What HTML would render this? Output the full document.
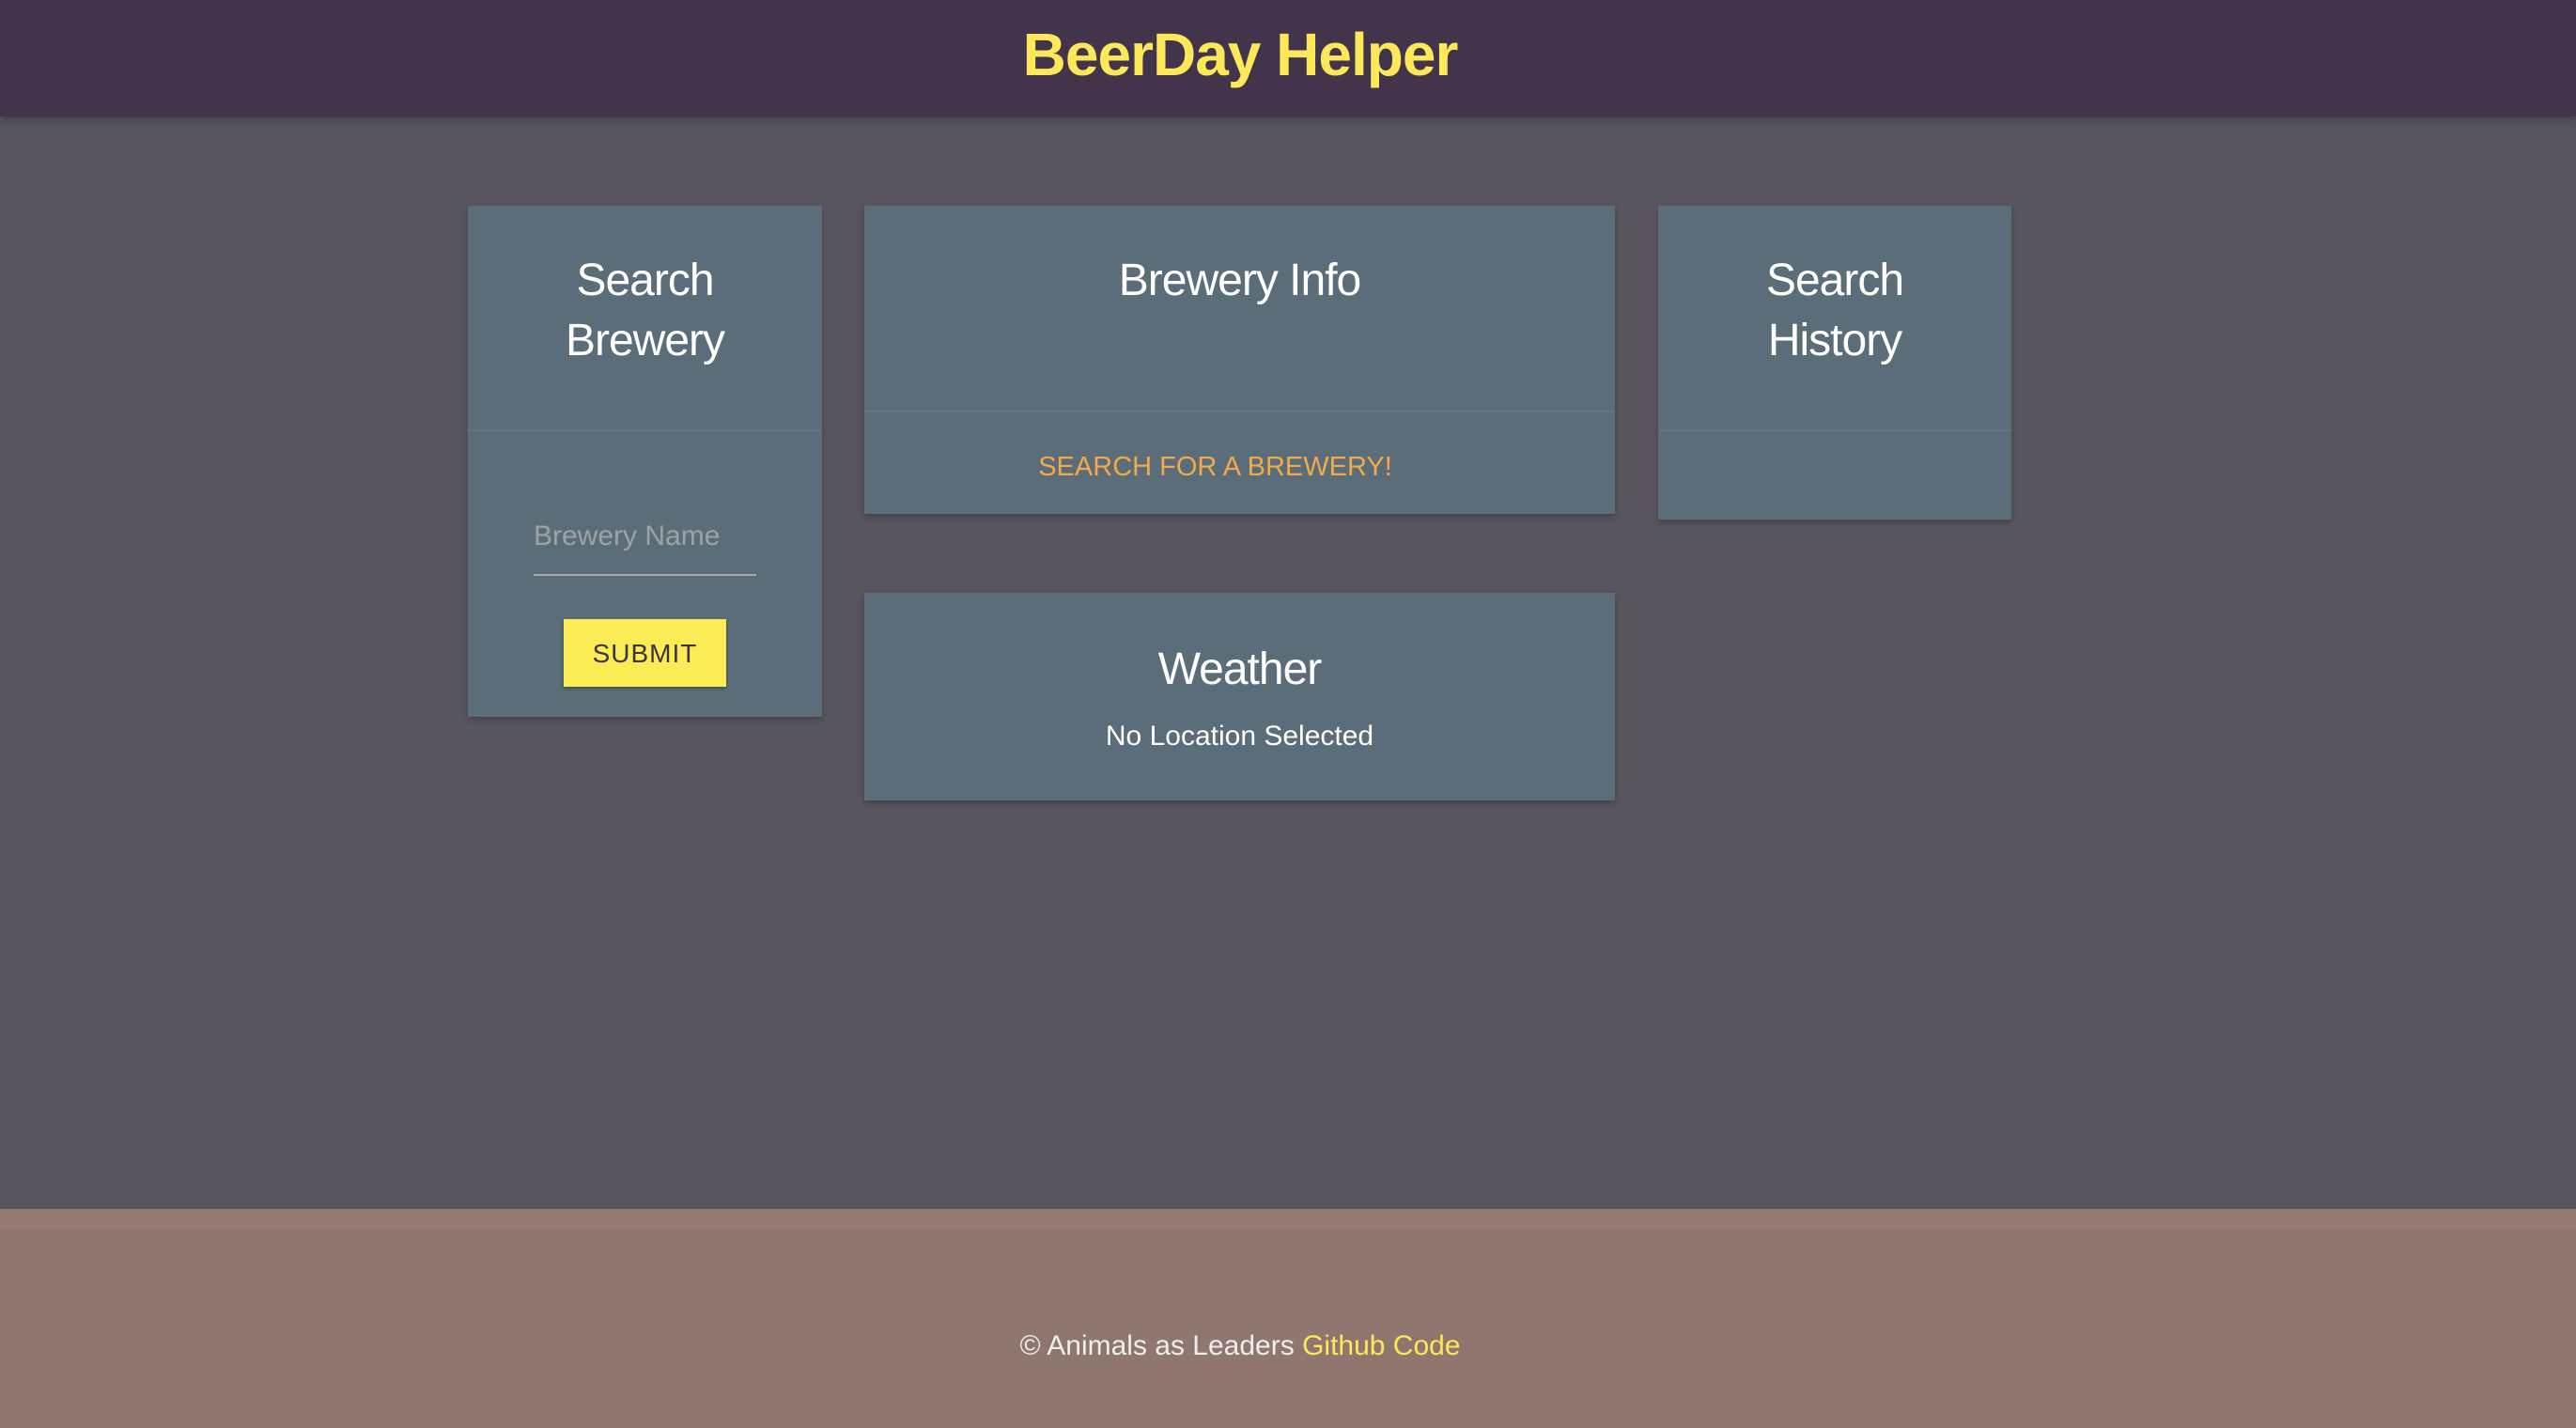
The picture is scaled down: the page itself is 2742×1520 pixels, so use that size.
<!DOCTYPE html>
<html><head><meta charset="utf-8"><style>
*{margin:0;padding:0;box-sizing:border-box}
body{width:2742px;height:1520px;background:#58555f;font-family:"Liberation Sans",sans-serif;position:relative;overflow:hidden}
.hdr{position:absolute;left:0;top:0;width:2742px;height:124px;background:#41344b;box-shadow:0 4px 8px rgba(0,0,0,.25)}
.hdr h1{position:absolute;left:0;width:2640px;top:22px;text-align:center;color:#fce858;font-size:64px;line-height:72px;font-weight:bold;letter-spacing:-1px}
.card{position:absolute;background:#5a6d78;box-shadow:0 3px 6px rgba(0,0,0,.25);color:#fff}
.t{position:absolute;left:0;width:100%;text-align:center;font-size:48px;line-height:64px;letter-spacing:-1px}
.div{position:absolute;left:0;width:100%;height:2px;background:#62747f}
.c{position:absolute;left:0;width:100%;text-align:center}
.ftr{position:absolute;left:0;top:1287px;width:2742px;height:233px;background:#8f766e}
.ftr .strip{position:absolute;left:0;top:0;width:100%;height:21px;background:#977b72}
</style></head><body>
<div class="hdr"><h1>BeerDay Helper</h1></div>

<div class="card" style="left:498px;top:219px;width:377px;height:544px">
 <div class="t" style="top:48px">Search<br>Brewery</div>
 <div class="div" style="top:238px"></div>
 <div style="position:absolute;left:70px;top:332px;color:#a0a3a6;font-size:30px;line-height:40px">Brewery Name</div>
 <div style="position:absolute;left:70px;top:392px;width:237px;height:2px;background:#a7a9ab"></div>
 <div style="position:absolute;left:102px;top:440px;width:173px;height:72px;background:#fbeb55;box-shadow:0 2px 4px rgba(0,0,0,.3);color:#3d3344;font-size:28px;line-height:74px;text-align:center;letter-spacing:1px">SUBMIT</div>
</div>

<div class="card" style="left:920px;top:219px;width:799px;height:328px">
 <div class="t" style="top:48px">Brewery Info</div>
 <div class="div" style="top:218px"></div>
 <div class="c" style="top:258px;left:-26px;color:#f2aa4c;font-size:29px;line-height:40px">SEARCH FOR A BREWERY!</div>
</div>

<div class="card" style="left:1765px;top:219px;width:376px;height:334px">
 <div class="t" style="top:48px">Search<br>History</div>
 <div class="div" style="top:238px"></div>
</div>

<div class="card" style="left:920px;top:631px;width:799px;height:221px">
 <div class="t" style="top:50px">Weather</div>
 <div class="c" style="top:133px;font-size:30px;line-height:40px">No Location Selected</div>
</div>

<div class="ftr"><div class="strip"></div>
 <div class="c" style="top:126px;width:2640px;font-size:30px;line-height:40px;color:#eee">© Animals as Leaders <span style="color:#fce858">Github Code</span></div>
</div>
</body></html>
